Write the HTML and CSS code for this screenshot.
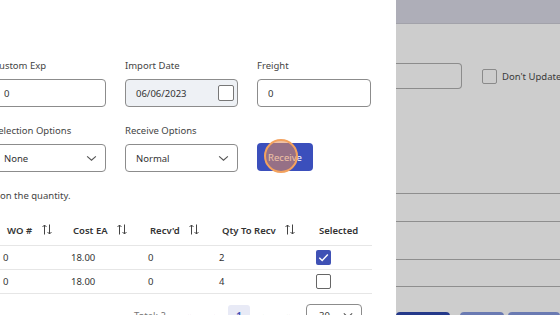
FILE: index.html
```html
<!DOCTYPE html>
<html lang="en">
<head>
  <meta charset="UTF-8">
  <meta name="viewport" content="width=device-width, initial-scale=1.0">
  <title>receive</title>
<link rel="stylesheet" href="styles.css">
</head>
<body>

  <div class="dialog">
    <div class="dialog-body">

      <div class="form-grid">
        <div class="field">
          <label for="custom">Custom Exp</label>
          <input type="text" id="custom" value="0">
        </div>
        <div class="field">
          <label for="idate">Import Date</label>
          <div class="date-box">
            <span>06/06/2023</span>
            <span class="small-check"></span>
          </div>
        </div>
        <div class="field">
          <label for="freight">Freight</label>
          <input type="text" id="freight" value="0">
        </div>

        <div class="field">
          <label>Selection Options</label>
          <div class="select-box">
            <span>None</span>
            <svg class="chev" viewBox="0 0 12 8" width="11" height="7"><path d="M1 1.5 L6 6 L11 1.5" fill="none" stroke="#555" stroke-width="1.3"/></svg>
          </div>
        </div>
        <div class="field">
          <label>Receive Options</label>
          <div class="select-box">
            <span>Normal</span>
            <svg class="chev" viewBox="0 0 12 8" width="11" height="7"><path d="M1 1.5 L6 6 L11 1.5" fill="none" stroke="#555" stroke-width="1.3"/></svg>
          </div>
        </div>
        <div class="field field-btn">
          <button class="btn-receive">Receive</button>
          <span class="click-ring"></span>
        </div>
      </div>

      <p class="note"><span class="note-lead">Items are received based </span>on the quantity.</p>

      <table class="items">
        <thead>
          <tr>
            <th class="c-wo">WO # <span class="sort"></span></th>
            <th class="c-cost">Cost EA <span class="sort"></span></th>
            <th class="c-recv">Recv'd <span class="sort"></span></th>
            <th class="c-qty">Qty To Recv <span class="sort"></span></th>
            <th class="c-sel">Selected</th>
          </tr>
        </thead>
        <tbody>
          <tr>
            <td>0</td>
            <td>18.00</td>
            <td>0</td>
            <td>2</td>
            <td><span class="cb checked"><svg viewBox="0 0 16 16" width="15" height="15"><path d="M3.5 8.2 L6.6 11.2 L12.6 4.8" fill="none" stroke="#fff" stroke-width="1.5"/></svg></span></td>
          </tr>
          <tr>
            <td>0</td>
            <td>18.00</td>
            <td>0</td>
            <td>4</td>
            <td><span class="cb"></span></td>
          </tr>
        </tbody>
      </table>

      <div class="pager">
        <span class="total">Total: 2</span>
        <span class="pg">«</span>
        <span class="pg">‹</span>
        <span class="pg active">1</span>
        <span class="pg">›</span>
        <span class="pg">»</span>
        <div class="per-page">
          <span>30</span>
          <svg viewBox="0 0 12 8" width="10" height="7"><path d="M1 1.5 L6 6 L11 1.5" fill="none" stroke="#555" stroke-width="1.3"/></svg>
        </div>
      </div>

    </div>
  </div>

  <div class="backdrop">
    <div class="bg-topbar"></div>
    <div class="bg-filter">
      <div class="bg-input"></div>
      <span class="bg-check"></span>
      <span class="bg-label">Don't Update</span>
    </div>
    <div class="bg-lines">
      <div class="bg-line l1"></div>
      <div class="bg-line l2"></div>
      <div class="bg-line l3"></div>
      <div class="bg-line l4"></div>
    </div>
    <div class="bg-actions">
      <span class="bg-btn dark"></span>
      <span class="bg-btn light"></span>
      <span class="bg-btn light wide"></span>
    </div>
  </div>

</body>
</html>
```

FILE: styles.css
```css
body {
  margin: 0;
  padding: 0;
  width: 560px;
  height: 315px;
  overflow: hidden;
  display: flex;
  font-family: "Noto Sans", "Open Sans", sans-serif;
  font-size: 9.5px;
  color: #333;
  background-color: #cdcdcd;
}

.dialog {
  width: 396px;
  flex-shrink: 0;
  height: 315px;
  background-color: #fff;
  overflow: hidden;
}

.dialog-body {
  margin-left: -7px;
  padding-top: 59px;
  width: 379px;
}

/* form */
.form-grid {
  display: grid;
  grid-template-columns: 113px 113px 114px;
  column-gap: 19px;
  row-gap: 17px;
}

.field {
  position: relative;
  display: flex;
  flex-direction: column;
}

.field label {
  display: block;
  line-height: 14px;
  margin-bottom: 6px;
  color: #444;
}

.field input[type="text"],
.date-box,
.select-box {
  box-sizing: border-box;
  height: 28px;
  width: 100%;
  border: 1px solid #8c8c8c;
  border-radius: 4px;
  padding: 0 10px;
  font-family: inherit;
  font-size: 9.5px;
  color: #333;
  background-color: #fff;
  display: flex;
  align-items: center;
}

.date-box {
  background-color: #eef1f5;
  justify-content: space-between;
  padding-right: 3px;
}

.small-check {
  width: 14px;
  height: 14px;
  border: 1px solid #777;
  border-radius: 2px;
  background-color: #fff;
}

.select-box {
  justify-content: space-between;
  padding-right: 8px;
}

.field-btn {
  justify-content: flex-end;
}

.btn-receive {
  width: 56px;
  height: 28px;
  margin-bottom: 1px;
  border: none;
  border-radius: 4px;
  background-color: #3b4fbc;
  color: #fff;
  font-family: inherit;
  font-size: 9.5px;
  padding: 0;
}

/* click marker over the button */
.click-ring {
  position: absolute;
  left: 7px;
  bottom: -1px;
  width: 30px;
  height: 30px;
  border-radius: 50%;
  border: 2px solid #f3a25e;
  background-color: rgba(226, 140, 90, 0.55);
}

.note {
  margin: 17px 0 0 0;
  line-height: 14px;
  color: #444;
  white-space: nowrap;
  text-indent: -110px;
  overflow: visible;
}

.note-lead {
  display: inline-block;
  width: 117px;
  overflow: hidden;
  vertical-align: top;
}

/* table */
.items {
  margin-top: 14px;
  border-collapse: collapse;
  width: 379px;
  table-layout: fixed;
}

.items th {
  box-sizing: border-box;
  height: 28px;
  text-align: left;
  font-weight: 600;
  color: #333;
  padding: 0 0 0 14px;
  border-bottom: 1px solid #e6e6e6;
  white-space: nowrap;
}

.items td {
  height: 23px;
  padding: 0 0 0 10px;
  border-bottom: 1px solid #e6e6e6;
  color: #333;
}

.items .c-wo { width: 68px; }
.items .c-cost { width: 77px; padding-left: 12px; }
.items .c-recv { width: 71px; padding-left: 12px; }
.items .c-qty { width: 97px; padding-left: 13px; }
.items .c-sel { padding-left: 13px; }

.sort {
  display: inline-block;
  width: 10px;
  height: 11px;
  margin-left: 7px;
  vertical-align: -1px;
  background:
    url("data:image/svg+xml,%3Csvg xmlns='http://www.w3.org/2000/svg' viewBox='0 0 10 11'%3E%3Cpath d='M2.5 10.5V1M0.5 3L2.5 1L4.5 3M7.5 0.5V10M5.5 8L7.5 10L9.5 8' fill='none' stroke='%23444' stroke-width='1'/%3E%3C/svg%3E") no-repeat;
}

.cb {
  display: inline-block;
  box-sizing: border-box;
  width: 15px;
  height: 15px;
  border: 1px solid #666;
  border-radius: 2px;
  vertical-align: middle;
  background-color: #fff;
}

.cb.checked {
  border: none;
  background-color: #3f51b5;
}

.cb svg {
  display: block;
}

/* pagination */
.pager {
  display: flex;
  align-items: center;
  justify-content: flex-end;
  gap: 3px;
  margin-top: 10px;
  padding-right: 10px;
  color: #777;
}

.pager .total {
  margin-right: 9px;
}

.pg {
  width: 22px;
  height: 22px;
  display: flex;
  align-items: center;
  justify-content: center;
  border-radius: 3px;
  font-size: 10.5px;
  color: #888;
}

.pg.active {
  background-color: #e8eaf6;
  color: #3f51b5;
  font-weight: 600;
}

.per-page {
  box-sizing: border-box;
  margin-left: 3px;
  width: 56px;
  height: 24px;
  border: 1px solid #8c8c8c;
  border-radius: 4px;
  display: flex;
  align-items: center;
  justify-content: space-between;
  padding: 0 8px 0 12px;
  color: #333;
}

/* page behind the dialog, dimmed */
.backdrop {
  flex: 1;
  display: flex;
  flex-direction: column;
  overflow: hidden;
}

.backdrop > * {
  flex-shrink: 0;
}

.bg-topbar {
  height: 23px;
  background-color: #aeaeb8;
  border-bottom: 1px solid #a2a2aa;
}

.bg-filter {
  display: flex;
  align-items: center;
  margin-top: 39px;
  height: 26px;
}

.bg-filter > * {
  flex-shrink: 0;
}

.bg-input {
  box-sizing: border-box;
  width: 66px;
  height: 26px;
  border: 1px solid #8c8c8c;
  border-left: none;
  border-radius: 0 4px 4px 0;
}

.bg-check {
  box-sizing: border-box;
  width: 15px;
  height: 15px;
  margin-left: 20px;
  border: 1px solid #8a8a8a;
  border-radius: 2px;
}

.bg-label {
  margin-left: 5px;
  color: #3a3a3a;
  white-space: nowrap;
}

.bg-lines {
  display: flex;
  flex-direction: column;
}

.bg-line {
  height: 1px;
  background-color: #8e8e8e;
}

.bg-line.l1 { margin-top: 104px; }
.bg-line.l2 { margin-top: 27px; }
.bg-line.l3 { margin-top: 37px; }
.bg-line.l4 { margin-top: 26px; }

.bg-actions {
  display: flex;
  gap: 4px;
  margin-top: 25px;
}

.bg-btn {
  height: 8px;
  border-radius: 4px 4px 0 0;
}

.bg-btn.dark {
  width: 62px;
  background-color: #24398a;
  margin-right: 6px;
}

.bg-btn.light {
  width: 50px;
  background-color: #6a7ab2;
}

.bg-btn.wide {
  width: 60px;
}
```
